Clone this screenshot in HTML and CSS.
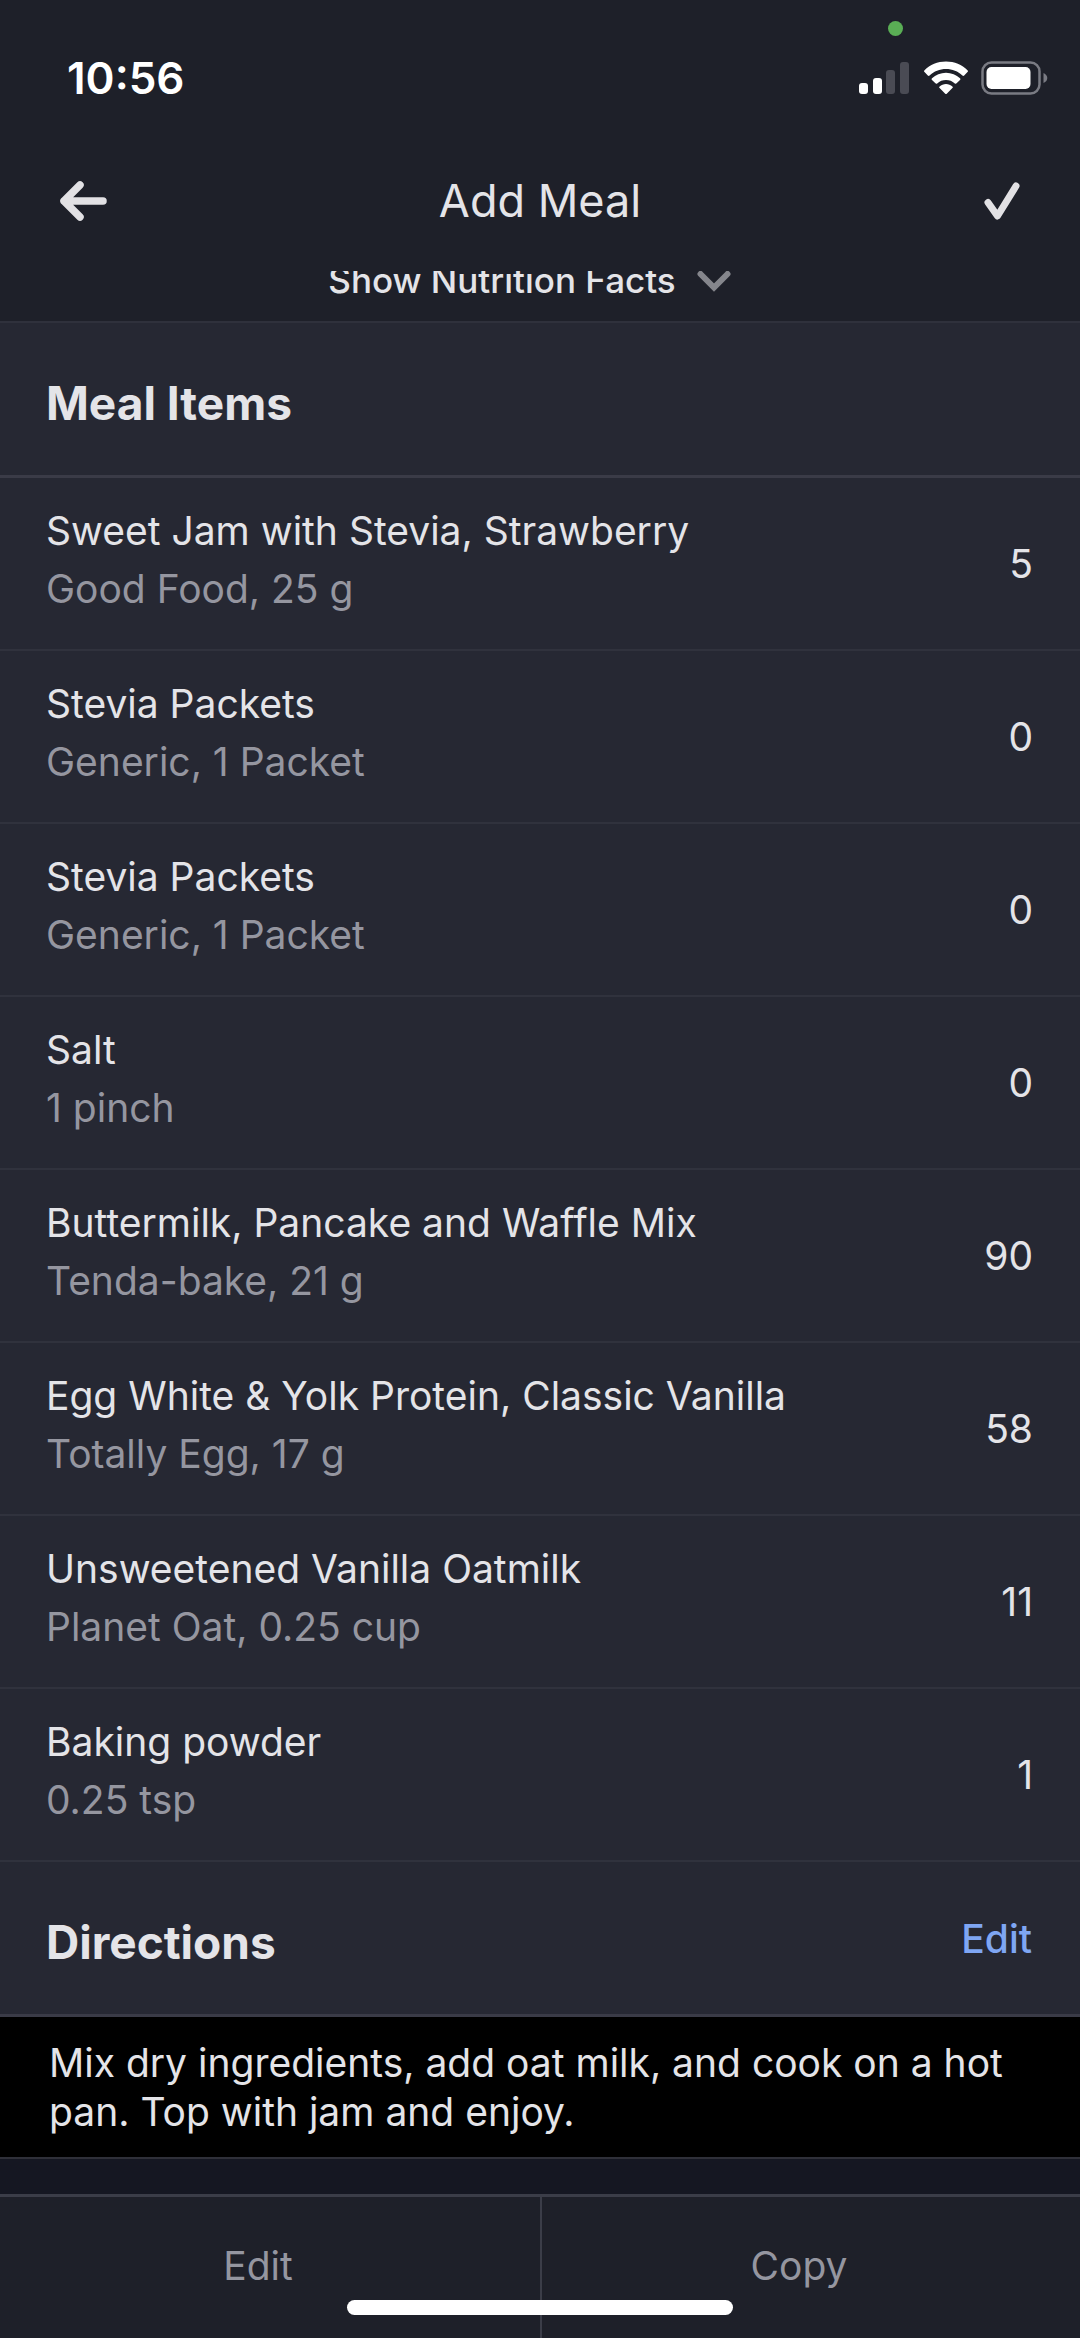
FILE: index.html
```html
<!DOCTYPE html>
<html lang="en">
<head>
<meta charset="utf-8">
<meta name="viewport" content="width=device-width, initial-scale=1">
<title>Add Meal</title>
<link rel="stylesheet" href="styles.css">
</head>
<body>
<div class="screen">
  <div class="status-bar">
    <span class="camera-dot"></span>
    <time class="clock">10:56</time>
    <div class="status-icons">
      <svg width="52" height="32" viewBox="0 0 52 32" aria-hidden="true">
        <rect x="0" y="21" width="9" height="11" rx="3" fill="#fff"/>
        <rect x="14" y="16" width="9" height="16" rx="3" fill="#fff"/>
        <rect x="27" y="8" width="9" height="24" rx="3" fill="#4a4b54"/>
        <rect x="41" y="0" width="9" height="32" rx="3" fill="#4a4b54"/>
      </svg>
      <svg width="44" height="34" viewBox="0 0 44 34" aria-hidden="true">
        <path fill="#fff" d="M22 0.500C30.500 0.500 38 3.800 43.500 9.200C44.100 9.800 44.100 10.500 43.500 11.100L40.200 14.500C39.600 15.100 39 15 38.400 14.500C34 10.500 28.300 8.100 22 8.100C15.700 8.100 10 10.500 5.600 14.500C5 15 4.400 15.100 3.800 14.500L0.500 11.100C-0.100 10.500 -0.100 9.800 0.500 9.200C6 3.800 13.500 0.500 22 0.500Z"/>
        <path fill="#fff" d="M22 11.700C27.400 11.700 32.300 13.800 36 17.200C36.600 17.800 36.600 18.400 36 19L32.600 22.300C32 22.900 31.400 22.900 30.800 22.400C28.400 20.300 25.300 19.100 22 19.100C18.700 19.100 15.600 20.300 13.200 22.400C12.600 22.900 12 22.900 11.400 22.300L8 19C7.400 18.400 7.400 17.800 8 17.200C11.700 13.800 16.600 11.700 22 11.700Z"/>
        <path fill="#fff" d="M22 23C24.400 23 26.700 23.900 28.400 25.400C29 26 29 26.500 28.400 27.100L23 32.500C22.300 33.200 21.700 33.200 21 32.500L15.600 27.100C15 26.500 15 26 15.600 25.400C17.300 23.900 19.600 23 22 23Z"/>
      </svg>
      <svg width="68" height="34" viewBox="0 0 68 34" aria-hidden="true">
        <rect x="1.500" y="1.500" width="57" height="31" rx="9" fill="none" stroke="#7a7b83" stroke-width="2.500"/>
        <rect x="5.500" y="6" width="44" height="22" rx="5" fill="#fff"/>
        <path d="M62.500 12c5 2 5 8 0 10z" fill="#7a7b83"/>
      </svg>
    </div>
  </div>

  <header class="nav-bar">
    <button class="icon-button" type="button" aria-label="Back">
      <svg width="48" height="40" viewBox="0 0 48 40" aria-hidden="true"><path d="M20 4L4 20L20 36M4 20H43" fill="none" stroke="#e2e1e4" stroke-width="7.500" stroke-linecap="round" stroke-linejoin="round"/></svg>
    </button>
    <h1 class="nav-title">Add Meal</h1>
    <button class="icon-button" type="button" aria-label="Save">
      <svg width="36" height="38" viewBox="0 0 36 38" aria-hidden="true"><path d="M4 20.500L13.500 34L32 4" fill="none" stroke="#e2e1e4" stroke-width="7" stroke-linecap="round" stroke-linejoin="round"/></svg>
    </button>
  </header>

  <main class="content">
    <div class="nutrition">
      <button class="nutrition-toggle" type="button">
        <span>Show Nutrition Facts</span>
        <svg width="36" height="26" viewBox="0 0 36 26" aria-hidden="true"><path d="M4.500 7L18 20.500L31.500 7" fill="none" stroke="#85868c" stroke-width="6" stroke-linecap="round"/></svg>
      </button>
    </div>

    <section>
      <div class="section-head">
        <h2 class="section-title">Meal Items</h2>
      </div>
      <ul class="items">
        <li class="item"><div class="item-text"><span class="item-name">Sweet Jam with Stevia, Strawberry</span><span class="item-detail">Good Food, 25 g</span></div><span class="calories">5</span></li>
        <li class="item"><div class="item-text"><span class="item-name">Stevia Packets</span><span class="item-detail">Generic, 1 Packet</span></div><span class="calories">0</span></li>
        <li class="item"><div class="item-text"><span class="item-name">Stevia Packets</span><span class="item-detail">Generic, 1 Packet</span></div><span class="calories">0</span></li>
        <li class="item"><div class="item-text"><span class="item-name">Salt</span><span class="item-detail">1 pinch</span></div><span class="calories">0</span></li>
        <li class="item"><div class="item-text"><span class="item-name">Buttermilk, Pancake and Waffle Mix</span><span class="item-detail">Tenda-bake, 21 g</span></div><span class="calories">90</span></li>
        <li class="item"><div class="item-text"><span class="item-name">Egg White &amp; Yolk Protein, Classic Vanilla</span><span class="item-detail">Totally Egg, 17 g</span></div><span class="calories">58</span></li>
        <li class="item"><div class="item-text"><span class="item-name">Unsweetened Vanilla Oatmilk</span><span class="item-detail">Planet Oat, 0.25 cup</span></div><span class="calories">11</span></li>
        <li class="item"><div class="item-text"><span class="item-name">Baking powder</span><span class="item-detail">0.25 tsp</span></div><span class="calories">1</span></li>
      </ul>
    </section>

    <section>
      <div class="section-head">
        <h2 class="section-title">Directions</h2>
        <button class="section-action" type="button">Edit</button>
      </div>
      <p class="directions">Mix dry ingredients, add oat milk, and cook on a hot pan. Top with jam and enjoy.</p>
    </section>
  </main>

  <footer class="toolbar">
    <button class="toolbar-button" type="button">Edit</button>
    <button class="toolbar-button" type="button">Copy</button>
    <span class="home-indicator"></span>
  </footer>
</div>
</body>
</html>
```

FILE: styles.css
```css
* {
  box-sizing: border-box;
}

body {
  margin: 0;
  background: #1e2029;
  color: #e4e4e8;
  font-family: Inter, "Liberation Sans", sans-serif;
  font-size: 39px;
  line-height: 48px;
}

button {
  margin: 0;
  padding: 0;
  border: 0;
  background: none;
  color: inherit;
  font: inherit;
}

svg {
  display: block;
}

h1,
h2,
p,
ul {
  margin: 0;
  padding: 0;
}

.screen {
  display: flex;
  flex-direction: column;
  min-height: 100vh;
}

.status-bar {
  position: relative;
  display: flex;
  align-items: center;
  justify-content: space-between;
  height: 132px;
  padding: 24px 31px 0 67px;
}

.camera-dot {
  position: absolute;
  top: 21px;
  right: 177px;
  width: 15px;
  height: 15px;
  border-radius: 50%;
  background: #5aae55;
}

.clock {
  color: #fff;
  font-size: 44px;
  font-weight: 600;
}

.status-icons {
  display: flex;
  align-items: center;
  gap: 13px;
}

.nav-bar {
  display: flex;
  align-items: center;
  justify-content: space-between;
  height: 139px;
  padding: 0 60px 2px;
}

.icon-button {
  display: flex;
  align-items: center;
  width: 48px;
}

.icon-button:last-child {
  justify-content: flex-end;
}

.nav-title {
  font-size: 45px;
  font-weight: 400;
}

.content {
  flex: 1;
  background: #151722;
}

.nutrition {
  display: flex;
  align-items: flex-end;
  justify-content: center;
  height: 52px;
  padding: 0 20px 17px 0;
  overflow: hidden;
  overflow: clip;
  border-bottom: 2px solid #2f313c;
  background: #1e2029;
}

.nutrition-toggle {
  display: flex;
  align-items: center;
  gap: 20px;
  font-size: 35px;
  font-weight: 500;
}

.section-head {
  display: flex;
  align-items: center;
  justify-content: space-between;
  height: 155px;
  padding: 8px 48px 0 46px;
  border-bottom: 3px solid #3a3b47;
  background: #262833;
}

.section-title {
  font-size: 46px;
  font-weight: 700;
}

.section-action {
  padding-bottom: 6px;
  color: #7fa6f3;
  font-weight: 500;
}

.items {
  list-style: none;
}

.item {
  display: flex;
  align-items: center;
  justify-content: space-between;
  height: 173px;
  padding: 0 47px 0 46px;
  border-bottom: 2px solid #30323d;
  background: #262833;
}

.item-text {
  display: grid;
  gap: 10px;
  padding-bottom: 8px;
}

.item-detail {
  color: #9596a0;
}

.directions {
  padding: 21px 48px 21px 49px;
  border-bottom: 2px solid #2f3039;
  background: #000;
  line-height: 49px;
}

.toolbar {
  position: relative;
  display: grid;
  grid-template-columns: 1fr 1fr;
  height: 144px;
  border-top: 3px solid #3b3d48;
}

.toolbar-button {
  padding: 0 24px 4px 0;
  color: #9596a0;
}

.toolbar-button + .toolbar-button {
  border-left: 2px solid #3b3d48;
}

.home-indicator {
  position: absolute;
  bottom: 23px;
  left: 50%;
  width: 386px;
  height: 15px;
  border-radius: 8px;
  background: #fff;
  transform: translateX(-50%);
}
```
